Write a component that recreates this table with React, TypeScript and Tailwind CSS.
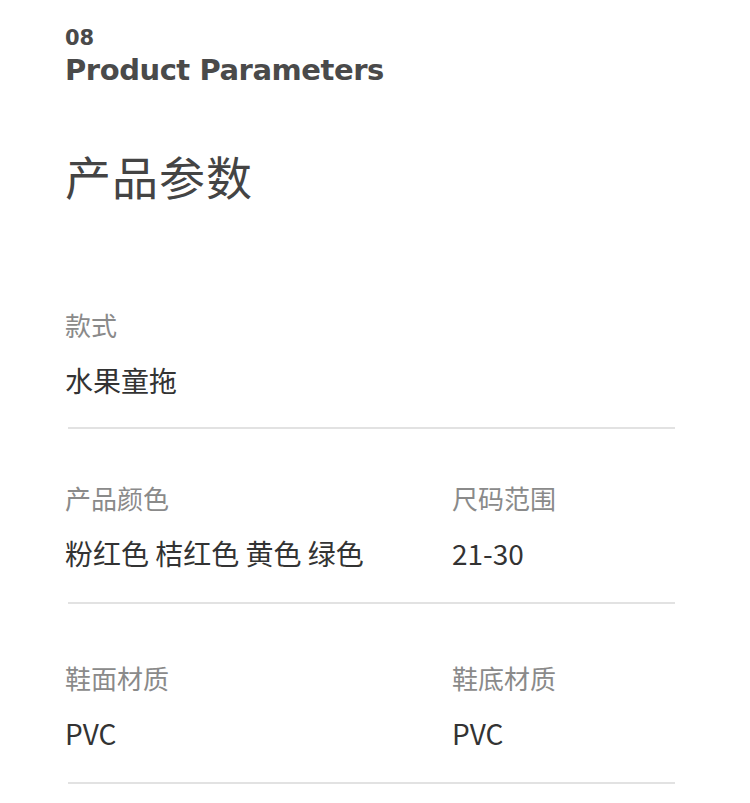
const CJK = "font-['Noto_Sans_CJK_SC','Noto_Sans',sans-serif]";

interface Field {
  label: string;
  value: string;
}

function Cell({ field }: { field: Field }) {
  return (
    <div className="flex flex-col">
      <div className="text-[26px] leading-[30px] text-[#8a8a8a]">{field.label}</div>
      <div className="mt-[25px] text-[28px] leading-[30px] text-[#333]">{field.value}</div>
    </div>
  );
}

function Divider() {
  return <div className="ml-[3px] h-[2px] w-[607px] bg-[#e2e2e2]" />;
}

export default function App() {
  return (
    <div className={`w-[750px] h-[803px] overflow-hidden bg-white pl-[65px] ${CJK}`}>
      <div className="pt-[27px] font-['DejaVu_Sans',sans-serif] font-bold text-[#4a4a4a]">
        <div className="text-[21px] leading-[22px]">08</div>
        <div className="mt-[4px] text-[29px] leading-[34px] tracking-[-0.45px]">Product Parameters</div>
      </div>

      <h1 className="mt-[63px] text-[46px] leading-[50px] font-normal text-[#444] tracking-[1px]">产品参数</h1>

      <div className="mt-[110px]">
        <Cell field={{ label: "款式", value: "水果童拖" }} />
      </div>
      <div className="mt-[32px]">
        <Divider />
      </div>

      <div className="mt-[54px] grid grid-cols-[387px_1fr]">
        <Cell field={{ label: "产品颜色", value: "粉红色 桔红色 黄色 绿色" }} />
        <Cell field={{ label: "尺码范围", value: "21-30" }} />
      </div>
      <div className="mt-[34px]">
        <Divider />
      </div>

      <div className="mt-[59px] grid grid-cols-[387px_1fr]">
        <Cell field={{ label: "鞋面材质", value: "PVC" }} />
        <Cell field={{ label: "鞋底材质", value: "PVC" }} />
      </div>
      <div className="mt-[34px]">
        <Divider />
      </div>
    </div>
  );
}
